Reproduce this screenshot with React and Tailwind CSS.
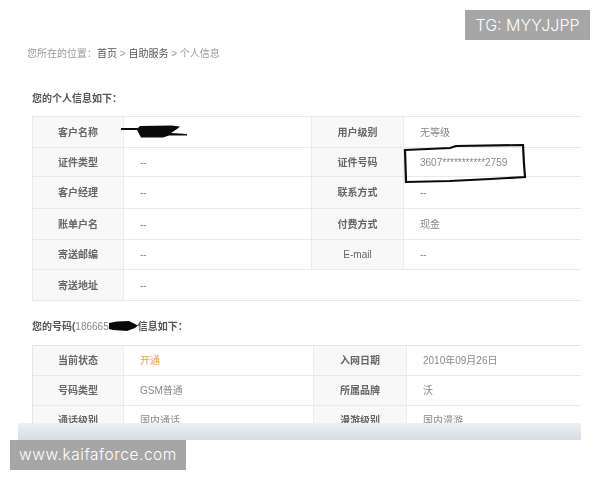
const font = { fontFamily: '"Liberation Sans", "Noto Sans CJK SC", sans-serif' };

const infoRows = [
  { h: "h-[31px]", a: "客户名称", b: "", c: "用户级别", d: "无等级", redact: true },
  { h: "h-[29px]", a: "证件类型", b: "--", c: "证件号码", d: "3607***********2759", circled: true },
  { h: "h-[32px]", a: "客户经理", b: "--", c: "联系方式", d: "--" },
  { h: "h-[31px]", a: "账单户名", b: "--", c: "付费方式", d: "现金" },
  { h: "h-[30px]", a: "寄送邮编", b: "--", c: "E-mail", d: "--", thin: true },
  { h: "h-[31px]", a: "寄送地址", b: "--", blank: true },
];

const numberRows = [
  { h: "h-[30px]", a: "当前状态", b: "开通", c: "入网日期", d: "2010年09月26日", orange: true },
  { h: "h-[30px]", a: "号码类型", b: "GSM普通", c: "所属品牌", d: "沃" },
  { h: "h-[30px]", a: "通话级别", b: "国内通话", c: "漫游级别", d: "国内漫游" },
];

function Row({ row, cols }) {
  return (
    <div className={`grid ${cols} ${row.h} border-b border-[#e9e9e9] text-[10px] items-stretch`}>
      <div className="flex items-center justify-center bg-[#f8f8f8] border-r border-[#ececec] font-bold text-[#666]">
        {row.a}
      </div>
      <div className={`relative flex items-center pl-[16px] ${row.orange ? "text-[#f0a040]" : "text-[#888]"}`}>
        {row.b}
        {row.redact && (
          <svg className="absolute left-[-3px] top-[8px]" width="68" height="14" viewBox="0 0 68 14">
            <path d="M0 3 L17 3 L19 1 L50 0.5 L59 1.5 L56 4 L50 8 L66 9 L66 10.5 L48 10.5 L42 12.5 L20 12.5 L16 5 L0 5 Z" fill="#0a0a0a" />
          </svg>
        )}
      </div>
      {row.blank ? (
        <div className="col-span-2" />
      ) : (
        <>
          <div className={`flex items-center justify-center bg-[#f8f8f8] border-x border-[#ececec] ${row.thin ? "font-normal" : "font-bold"} text-[#666]`}>
            {row.c}
          </div>
          <div className="relative flex items-center pl-[16px] text-[#888]">
            {row.d}
            {row.circled && (
              <svg className="absolute left-0 top-[-4px] overflow-visible" width="122" height="40" viewBox="0 0 122 40">
                <path d="M1 6 L46 4 L52 2 L119 1 L120 20 L121 33 L86 35 L46 37 L2 38 Z" fill="none" stroke="#0a0a0a" strokeWidth="2.2" />
              </svg>
            )}
          </div>
        </>
      )}
    </div>
  );
}

export default function App() {
  return (
    <div className="relative w-[600px] h-[480px] bg-white overflow-hidden" style={font}>
      <div className="mx-[18px] w-[563px] h-[440px] flex flex-col">
        <div className="h-[423px] overflow-hidden blur-[0.4px]">
          {/* breadcrumb */}
          <div className="pt-[47px] pl-[9px] h-[87px] text-[10px] leading-[14px] text-[#999]">
            您所在的位置：<span className="text-[#555]">首页</span> &gt; <span className="text-[#555]">自助服务</span> &gt; 个人信息
          </div>

          <div className="pl-[14px] w-[563px]">
            <h2 className="h-[29px] pt-[5px] text-[10px] leading-[14px] font-bold text-[#555]">您的个人信息如下：</h2>
            <div className="w-[549px] border-t border-l border-[#e9e9e9]">
              {infoRows.map((row) => (
                <Row key={row.a} row={row} cols="grid-cols-[91px_187px_93px_177px]" />
              ))}
            </div>

            <h2 className="flex items-center h-[44px] pt-[6px] text-[10px] font-bold text-[#555]">
              您的号码(<span className="font-normal text-[#888]">186665</span>
              <svg width="29" height="10" viewBox="0 0 29 10">
                <path d="M0 2 L8 0.5 L20 0 L26 3 L29 4.5 L26 7 L18 10 L4 9 L0 8 Z" fill="#0a0a0a" />
              </svg>
              信息如下：
            </h2>
            <div className="w-[549px] border-t border-l border-[#e4e4e4]">
              {numberRows.map((row) => (
                <Row key={row.a} row={row} cols="grid-cols-[91px_189px_94px_174px]" />
              ))}
            </div>
          </div>
        </div>
        <div className="h-[17px] bg-gradient-to-b from-[#eef1f5] to-[#d5dce4]" />
      </div>

      {/* watermarks */}
      <div
        className="absolute left-[465px] top-[10px] w-[125px] h-[30px] flex items-center justify-center bg-[#a6a6a6] text-white text-[16px] font-light"
        style={{ fontFamily: "Inter, sans-serif" }}
      >
        TG: MYYJJPP
      </div>
      <div
        className="absolute left-[10px] top-[440px] w-[176px] h-[30px] flex items-center justify-center bg-[#a6a6a6] text-white text-[15.5px] font-light tracking-[0.55px]"
        style={{ fontFamily: "Inter, sans-serif" }}
      >
        www.kaifaforce.com
      </div>
    </div>
  );
}
